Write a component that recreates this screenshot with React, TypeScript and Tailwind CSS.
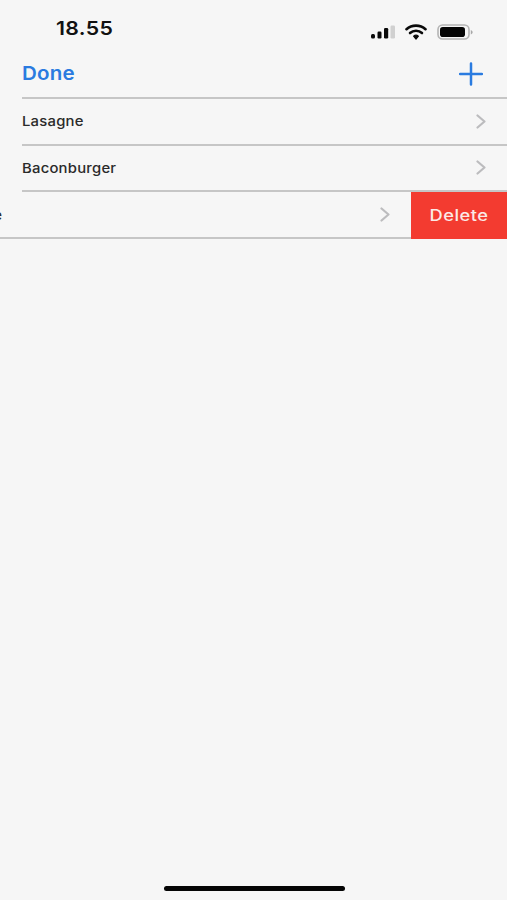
const font = { fontFamily: 'Inter, "Liberation Sans", sans-serif' };

function Chevron({ className = "" }: { className?: string }) {
  return (
    <svg width="10" height="15" viewBox="0 0 10 15" fill="none" className={className}>
      <path d="M1.5 1.5L8.5 7.5L1.5 13.5" stroke="#bcbcbe" strokeWidth="2.2" strokeLinecap="round" strokeLinejoin="round" />
    </svg>
  );
}

function Row({ label }: { label: string }) {
  return (
    <div className="ml-[22px] flex h-[46.67px] items-center justify-between border-b-2 border-[#c6c6c6] pr-[21px]">
      <span className="inline-block origin-left scale-x-[1.1] text-[13.5px] font-medium tracking-[0.2px] text-[#2a2a2a]">{label}</span>
      <Chevron />
    </div>
  );
}

function StatusIcons() {
  return (
    <div className="flex items-center gap-[9px]">
      <svg width="26" height="14" viewBox="0 0 26 14">
        <rect x="1" y="9" width="4" height="4.5" rx="1.5" fill="#0a0a0a" />
        <rect x="7.5" y="6.5" width="4" height="7" rx="1.2" fill="#0a0a0a" />
        <rect x="14" y="3" width="4.2" height="10.5" rx="1.2" fill="#0a0a0a" />
        <rect x="20.5" y="0.5" width="4.5" height="13" rx="1.2" fill="#d0d0d0" />
      </svg>
      <svg width="22" height="16" viewBox="0 0 22 16" fill="none">
        <path d="M1.5 5.2C6.8 0.4 15.2 0.4 20.5 5.2" stroke="#0a0a0a" strokeWidth="2.6" strokeLinecap="round" />
        <path d="M5 9C8.4 6 13.6 6 17 9" stroke="#0a0a0a" strokeWidth="2.6" strokeLinecap="round" />
        <path d="M8.6 12.2C10 11 12 11 13.4 12.2L11 15Z" fill="#0a0a0a" stroke="#0a0a0a" strokeWidth="1.2" strokeLinejoin="round" />
      </svg>
      <svg width="36" height="16" viewBox="0 0 36 16" className="ml-[1px]">
        <rect x="1" y="1" width="31" height="14" rx="4.5" fill="none" stroke="#b4b4b4" strokeWidth="1.6" />
        <rect x="3" y="3" width="25" height="10" rx="2.8" fill="#050505" />
        <path d="M33.8 6V10.4C35 10 35.6 9 35.6 8.2C35.6 7.4 35 6.4 33.8 6Z" fill="#a8a8a8" />
      </svg>
    </div>
  );
}

export default function App() {
  return (
    <div className="relative flex h-[900px] w-[507px] flex-col overflow-hidden bg-[#f6f6f6]" style={font}>
      <div className="flex h-[50px] items-end justify-between pb-[10px] pl-[56px] pr-[34px]">
        <span className="inline-block origin-left scale-x-[1.12] text-[19px] leading-[22px] font-semibold tracking-[0.3px] text-[#111111]">18.55</span>
        <StatusIcons />
      </div>

      <div className="ml-[22px] flex h-[49px] items-center justify-between border-b-2 border-[#c6c6c6] pt-[2px] pr-[24px]">
        <span className="inline-block origin-left scale-x-[1.08] text-[19px] font-semibold tracking-[0.2px] text-[#2a7be0]">Done</span>
        <svg width="24" height="24" viewBox="0 0 24 24" fill="none" className="mb-[2px]">
          <path d="M12 1.5V22.5M1 12H23" stroke="#2a7be0" strokeWidth="2.5" strokeLinecap="round" />
        </svg>
      </div>

      <Row label="Lasagne" />
      <Row label="Baconburger" />

      <div className="flex h-[46.67px] items-stretch overflow-hidden">
        <div className="flex flex-1 items-center justify-between border-b-2 border-[#c6c6c6] pr-[21px]">
          <span className="ml-[-74px] w-[76px] text-right text-[13.5px] font-medium whitespace-nowrap text-[#2a2a2a]">Tiramisùe</span>
          <Chevron />
        </div>
        <div className="flex w-[96px] items-center justify-center bg-[#f33b30] pb-[1px] text-[15.5px] font-medium tracking-[0.4px] text-[#fbe9e6]">
          <span className="inline-block scale-x-[1.18]">Delete</span>
        </div>
      </div>

      <div className="mt-auto mb-[9px] ml-[1px] h-[5px] w-[181px] self-center rounded-full bg-[#050505]" />
    </div>
  );
}
